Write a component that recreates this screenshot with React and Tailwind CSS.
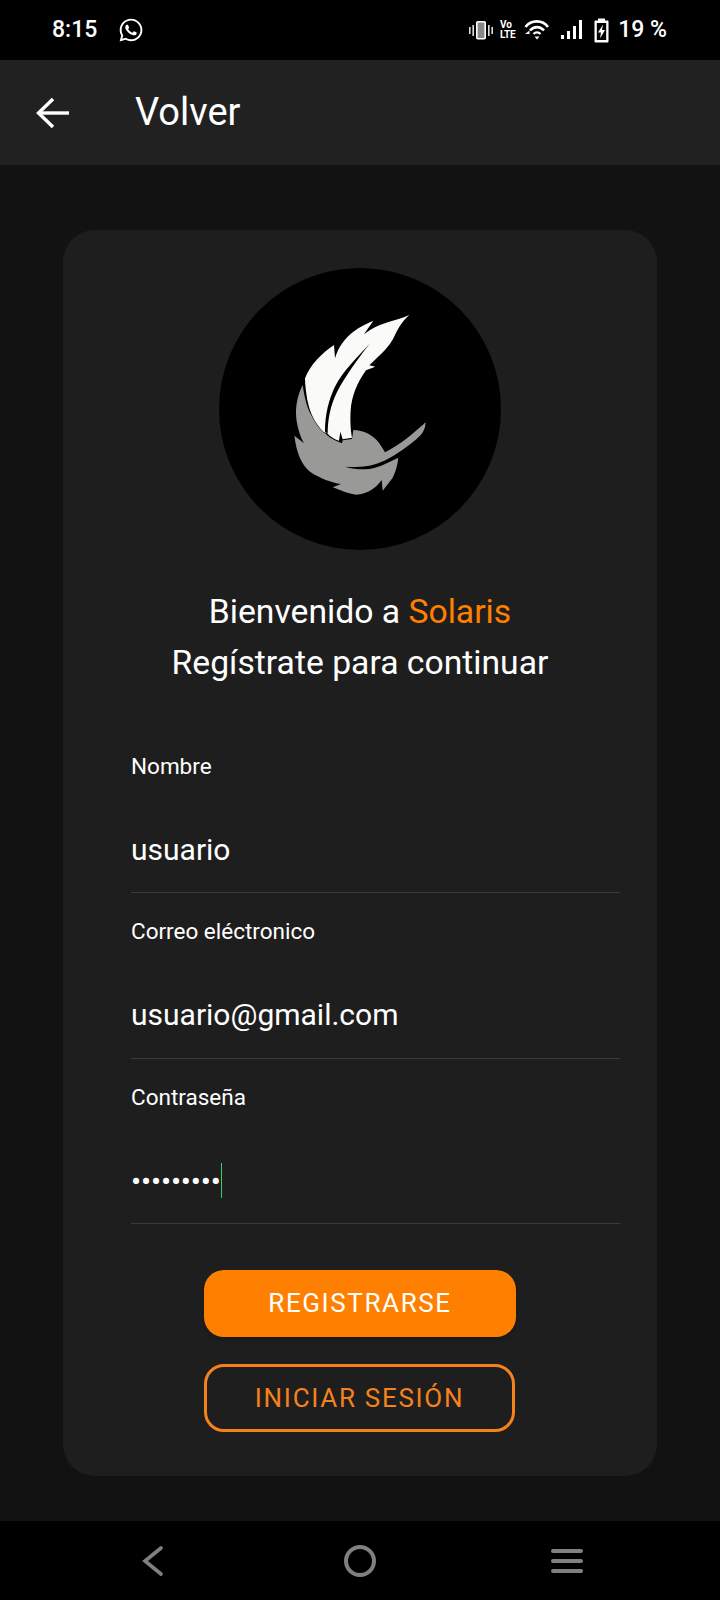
import React from 'react';
import { FaWhatsapp } from 'react-icons/fa';

const font = { fontFamily: 'Roboto, sans-serif' };

const StatusIcons = () => (
  <svg width="113" height="26" viewBox="0 0 113 26">
    {/* vibrate */}
    <rect x="0" y="10" width="1.6" height="7" fill="#ddd" />
    <rect x="3.4" y="8" width="1.6" height="11" fill="#ddd" />
    <rect x="7.8" y="4.8" width="8.4" height="17" rx="1" fill="#888" stroke="#fff" strokeWidth="1.6" />
    <rect x="19" y="8" width="1.6" height="11" fill="#ddd" />
    <rect x="22.4" y="10" width="1.6" height="7" fill="#ddd" />
    {/* volte */}
    <text x="31" y="11" fontSize="10" fontWeight="700" fill="#fff" fontFamily="Roboto, sans-serif">Vo</text>
    <text x="31" y="21" fontSize="10" fontWeight="700" fill="#fff" fontFamily="Roboto, sans-serif" letterSpacing="-0.2">LTE</text>
    {/* wifi */}
    <path d="M56.5 10 C62 2.5 73.5 2.5 79 10" fill="none" stroke="#fff" strokeWidth="2.6" />
    <path d="M61 13.5 C65 9 71 9 75 13.5" fill="none" stroke="#fff" strokeWidth="2.6" />
    <path d="M64.5 17 C66.5 15 69.5 15 71.5 17" fill="none" stroke="#fff" strokeWidth="2.4" />
    <path d="M65.5 19.5 H70.5 L68 22.5 Z" fill="#fff" />
    <path d="M56 17 L60.5 13.5 L60.5 17 Z" fill="#fff" />
    {/* signal */}
    <rect x="92" y="18" width="3" height="4" fill="#fff" />
    <rect x="98" y="14" width="3" height="8" fill="#fff" />
    <rect x="104" y="9" width="3" height="13" fill="#fff" />
    <rect x="110" y="3" width="3" height="19" fill="#fff" />
  </svg>
);

const Battery = () => (
  <svg width="15" height="25" viewBox="0 0 15 25">
    <path fillRule="evenodd" fill="#fff" d="M4 0.5 H11 V2.5 H13.5 Q14.5 2.5 14.5 3.5 V23.5 Q14.5 24.5 13.5 24.5 H1.5 Q0.5 24.5 0.5 23.5 V3.5 Q0.5 2.5 1.5 2.5 H4 Z M2.8 5 V22 H12.2 V5 Z" />
    <path fill="#fff" d="M9 6.5 L4 14.5 H7 L6 20.5 L11 12 H8 Z" />
  </svg>
);

const Field = ({ label, children }) => (
  <div className="h-[165.5px] border-b border-[#3b3b3b] flex flex-col">
    <label className="text-[22.5px] leading-[26px] text-white mt-[25px]">{label}</label>
    {children}
  </div>
);

const App = () => {
  return (
    <div className="w-[720px] h-[1600px] flex flex-col bg-[#121212]" style={font}>
      {/* status bar */}
      <div className="h-[60px] bg-black flex items-center justify-between pl-[52px] pr-[53px] text-white shrink-0">
        <div className="flex items-center gap-[21px]">
          <span className="text-[23px] font-medium">8:15</span>
          <FaWhatsapp className="text-[26px]" />
        </div>
        <div className="flex items-center">
          <StatusIcons />
          <span className="w-[12px]" />
          <Battery />
          <span className="text-[23px] font-medium ml-[9px]">19 %</span>
        </div>
      </div>

      {/* header */}
      <div className="h-[105px] bg-[#212121] flex items-center shrink-0 pl-[36px]">
        <svg width="33" height="32" viewBox="0 0 33 32" fill="none" stroke="#fff" strokeWidth="3.4">
          <path d="M33 16 H2" />
          <path d="M17 2 L2.5 16 L17 30" />
        </svg>
        <span className="text-[38px] text-white ml-[66px]">Volver</span>
      </div>

      {/* content */}
      <div className="flex-1 px-[63px] pt-[65px]">
        <div className="h-[1246px] bg-[#1e1e1e] rounded-[32px] flex flex-col items-center pt-[38px]">
          <div className="w-[282px] h-[282px] rounded-full bg-black shrink-0">
            <svg viewBox="-123 -66 846 846" className="w-full h-full">
              <path fill="#fafaf8" d="M135 265 C150 225 185 190 222 165 L225 205 C235 170 255 145 280 125 C300 110 320 100 340 92 L312 133 L330 120 C365 98 410 92 448 75 C425 95 415 115 405 135 C390 170 360 195 328 226 L346 230 L318 241 C290 280 275 320 272 360 C270 395 272 420 276 443 L248 448 L241 425 L237 452 C222 447 212 440 203 431 L190 425 C165 400 150 370 142 330 C138 305 135 285 135 265 Z" />
              <path fill="#000" d="M330 160 C290 205 250 240 224 292 C207 328 195 372 195 425 L203 431 C203 385 212 345 230 308 C255 260 295 205 330 160 Z" />
              <path fill="#999998" d="M128 285 C133 320 140 350 152 372 C165 398 180 420 195 430 C210 445 225 452 246 460 L248 451 L276 447 L280 420 C310 420 340 435 358 460 L375 487 C420 465 460 430 497 397 C495 420 488 432 470 447 C450 463 430 478 412 490 C395 502 370 515 345 523 C320 531 290 533 255 530 C290 540 320 540 345 533 C370 526 395 512 415 503 C412 530 405 550 397 565 L368 602 L365 570 C350 590 330 610 290 614 C265 612 240 600 218 592 L243 582 C215 578 180 565 150 545 C125 525 110 490 103 437 L132 460 C120 440 108 400 108 370 C108 340 115 310 128 285 Z" />
            </svg>
          </div>

          <h1 className="text-[33.7px] leading-[50px] text-white text-center mt-[37px] font-normal">
            Bienvenido a <span className="text-[#ff8000]">Solaris</span>
          </h1>
          <p className="text-[33.7px] leading-[51px] text-white text-center">Regístrate para continuar</p>

          <div className="w-full pl-[68px] pr-[37px] mt-[39.5px]">
            <Field label="Nombre">
              <div className="text-[30px] leading-[36px] text-white mt-[53px]">usuario</div>
            </Field>
            <Field label="Correo eléctronico">
              <div className="text-[30px] leading-[36px] text-white mt-[53px]">usuario@gmail.com</div>
            </Field>
            <Field label="Contraseña">
              <div className="flex items-center mt-[53px] h-[36px]">
                <span className="text-[30px] leading-[36px] text-white relative top-[1px] tracking-[-0.15px]">•••••••••</span>
                <span className="w-px h-[35px] bg-[#3ecf5c]" />
              </div>
            </Field>
          </div>

          <button className="w-[312px] h-[67px] mt-[46px] rounded-[20px] bg-[#ff8000] text-white text-[26px] tracking-[1.6px] shadow-md shrink-0">
            REGISTRARSE
          </button>
          <button className="w-[311px] h-[68px] mt-[27px] mr-[1px] rounded-[20px] border-[3px] border-[#f5821a] text-[#f5821a] text-[26px] tracking-[1.7px] shrink-0">
            INICIAR SESIÓN
          </button>
        </div>
      </div>

      {/* nav bar */}
      <div className="h-[79px] bg-black flex items-center shrink-0 pl-[141px] gap-[180px]">
        <svg width="24" height="32" viewBox="0 0 24 32" fill="none" stroke="#808080" strokeWidth="3.6" strokeLinecap="round">
          <path d="M20 3 L4 16 L20 29" />
        </svg>
        <div className="w-[32px] h-[32px] rounded-full border-[4px] border-[#808080] -ml-[1px]" />
        <div className="w-[32px] flex flex-col gap-[6px] -ml-[5px]">
          <div className="h-[4px] rounded-full bg-[#808080]" />
          <div className="h-[4px] rounded-full bg-[#808080]" />
          <div className="h-[4px] rounded-full bg-[#808080]" />
        </div>
      </div>
    </div>
  );
};

export default App;
